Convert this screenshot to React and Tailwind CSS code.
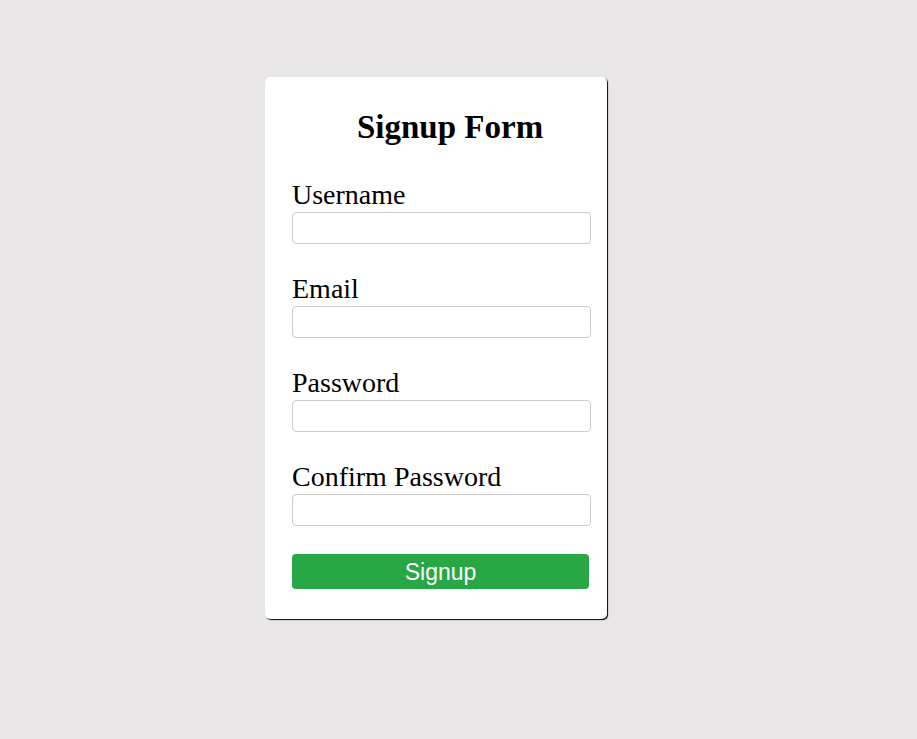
export default function App() {
  const fields = ["Username", "Email", "Password", "Confirm Password"];
  return (
    <div className="min-h-[739px] bg-[#e8e6e7] pt-[77px] pl-[265px]">
      <div className="w-[342px] h-[542px] bg-white rounded-[5px] shadow-[1px_1px_1px_#000] pt-[31px] px-[27px]">
        <h2 className="ml-[65px] text-[33px] leading-[38px] font-bold text-black font-['Liberation_Serif',serif]">
          Signup Form
        </h2>
        <form className="mt-[33px]" onSubmit={(e) => e.preventDefault()}>
          {fields.map((label, i) => (
            <div key={label} className={i > 0 ? "mt-[29px]" : ""}>
              <label className="block text-[28px] leading-[32px] text-black font-['Liberation_Serif',serif]">
                {label}
              </label>
              <input
                type={label.includes("Password") ? "password" : label === "Email" ? "email" : "text"}
                className="mt-px block w-[299px] h-[32px] border border-[#ccc] rounded-[4px] bg-white px-2"
              />
            </div>
          ))}
          <button
            type="submit"
            className="mt-[28px] block w-[297px] h-[35px] bg-[#28a745] rounded-[4px] text-white text-[23px] leading-[32px] font-['Liberation_Sans',Arial,sans-serif]"
          >
            Signup
          </button>
        </form>
      </div>
    </div>
  );
}
